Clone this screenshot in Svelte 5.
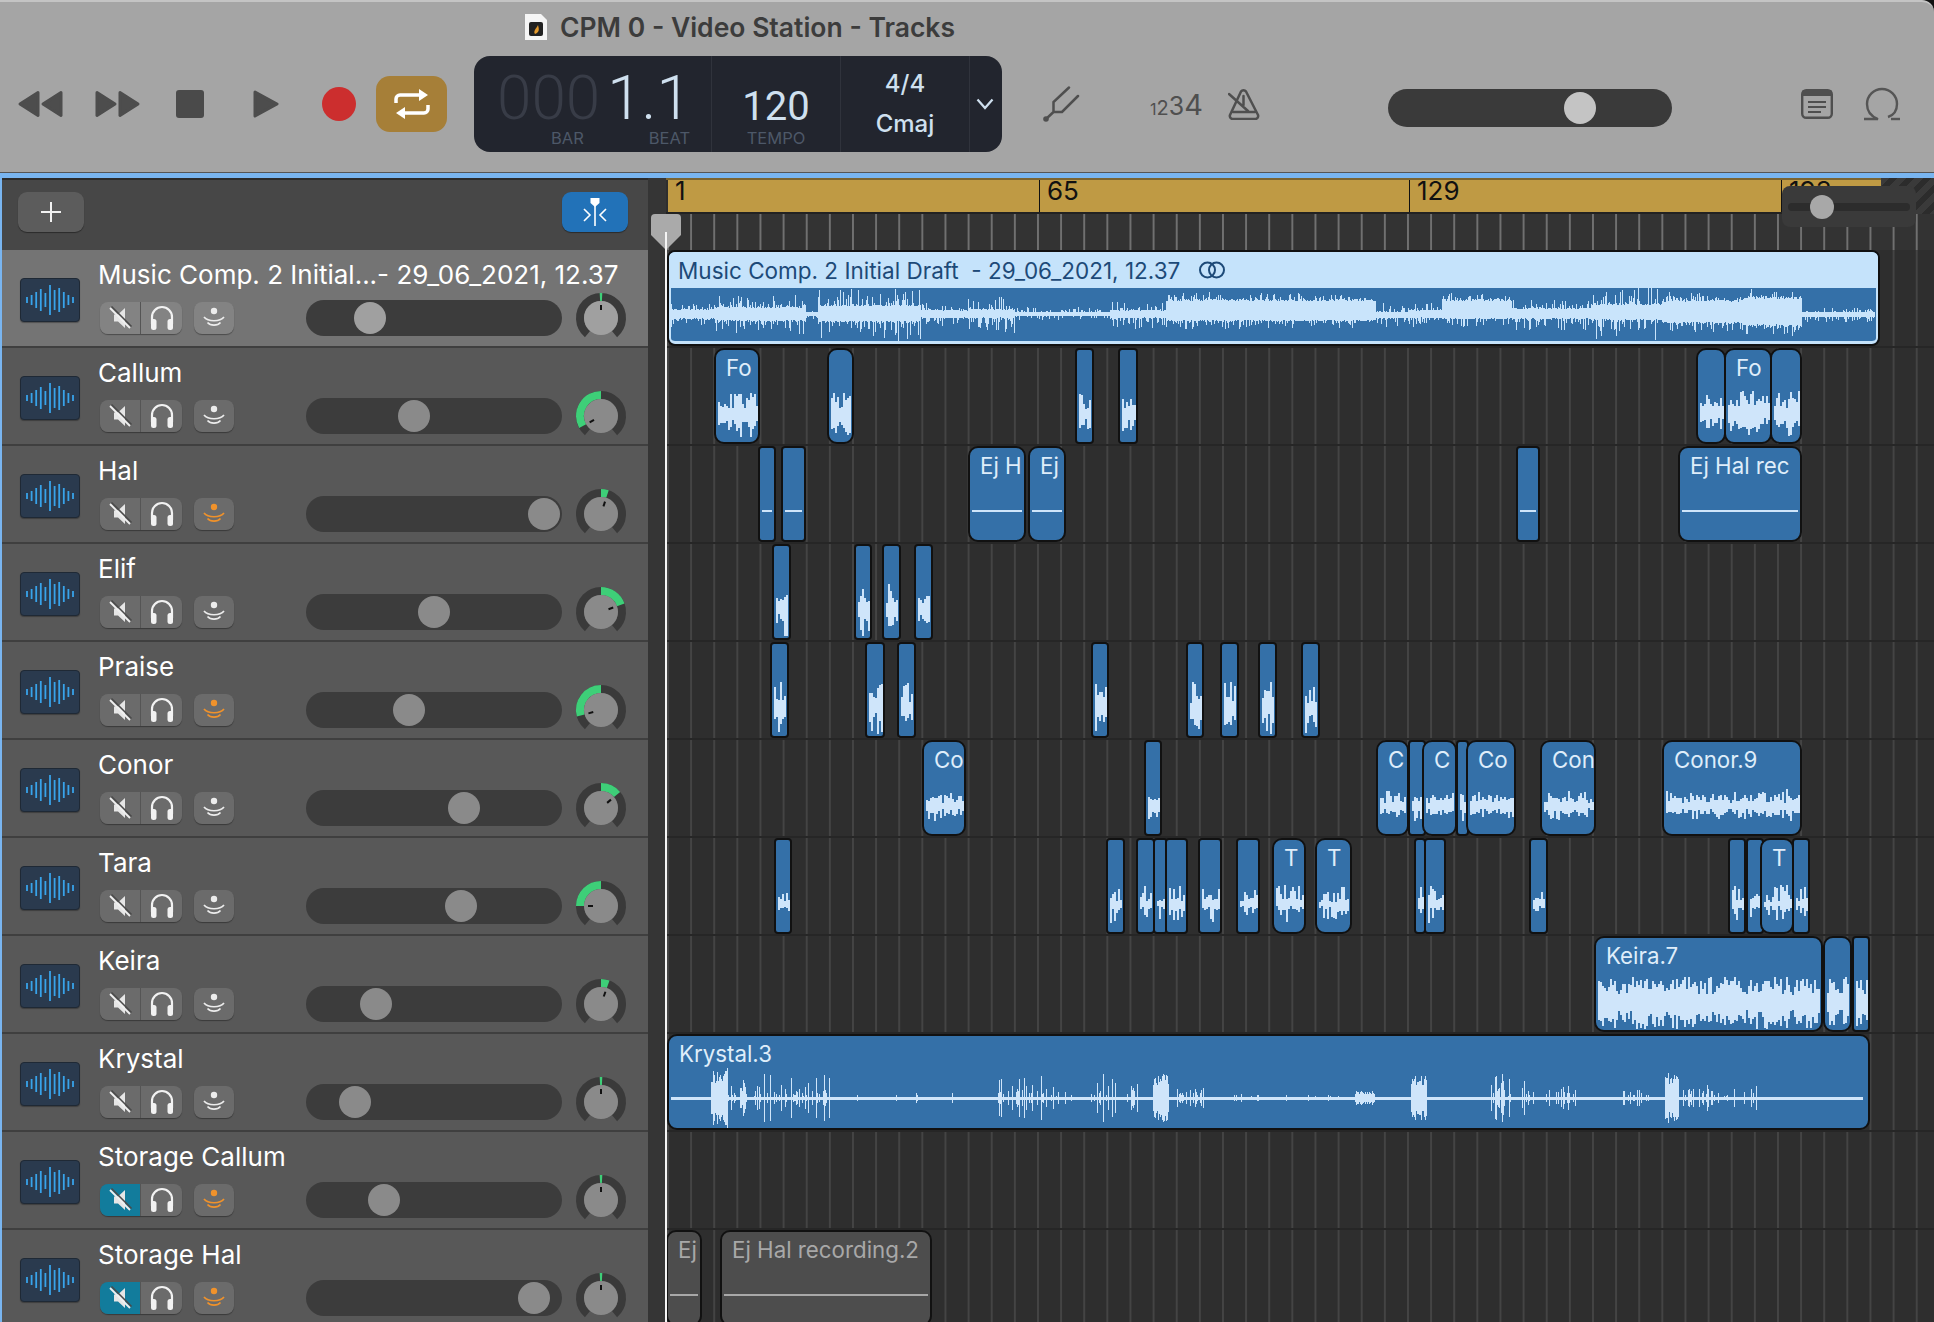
<script>
  // pan is the knob angle in degrees, 0 = centre
  const tracks = [
    { name: "Music Comp. 2 Initial...- 29_06_2021, 12.37", vol: 370, pan: 0, selected: true },
    { name: "Callum", vol: 414, pan: -119 },
    { name: "Hal", vol: 544, pan: 18, mon: true },
    { name: "Elif", vol: 434, pan: 70 },
    { name: "Praise", vol: 409, pan: -105, mon: true },
    { name: "Conor", vol: 464, pan: 50 },
    { name: "Tara", vol: 461, pan: -90 },
    { name: "Keira", vol: 376, pan: 20 },
    { name: "Krystal", vol: 355, pan: 0 },
    { name: "Storage Callum", vol: 384, pan: 0, mon: true, muted: true },
    { name: "Storage Hal", vol: 534, pan: 0, mon: true, muted: true }
  ];

  const ORIGIN = 666;

  const narrow = (pairs, core, spike, max) => pairs.map(([l, r, label]) => ({ l, r, label, core, spike, max }));

  const lanes = [
    [],
    narrow([[715, 759, "Fo"], [828, 853], [1076, 1093], [1119, 1137], [1697, 1725], [1725, 1771, "Fo"], [1771, 1801]], 16, 12, 23),
    narrow([[759, 775], [782, 805], [969, 1025, "Ej H"], [1029, 1065, "Ej"], [1517, 1539], [1679, 1801, "Ej Hal rec"]], 1, 0),
    narrow([[773, 790], [855, 871], [883, 900], [915, 932]], 15, 18, 26),
    narrow([[771, 788], [866, 884], [898, 915], [1092, 1108], [1187, 1203], [1221, 1238], [1259, 1276], [1302, 1319]], 15, 18, 26),
    narrow([[923, 965, "Co"], [1145, 1161], [1377, 1408, "C"], [1409, 1425], [1423, 1456, "C"], [1457, 1468], [1467, 1515, "Co"], [1541, 1595, "Con"], [1663, 1801, "Conor.9"]], 9, 9, 17),
    narrow([[775, 791], [1107, 1124], [1137, 1154], [1154, 1167], [1166, 1187], [1199, 1221], [1237, 1259], [1273, 1305, "T"], [1316, 1351, "T"], [1415, 1425], [1425, 1445], [1530, 1547], [1729, 1745], [1747, 1763], [1761, 1793, "T"], [1793, 1809]], 6, 15, 20),
    narrow([[1595, 1822, "Keira.7"], [1824, 1851], [1853, 1869]], 24, 10, 26),
    [{ l: 668, r: 1869, label: "Krystal.3", kind: "sparse" }],
    [],
    [
      { l: 667, r: 701, label: "Ej", core: 1, spike: 0, off: true },
      { l: 721, r: 931, label: "Ej Hal recording.2", core: 1, spike: 0, off: true }
    ]
  ];

  // x in px from the left of the clip, [from, up, down, spike]
  const draftEnv = [
    [0, 5, 5, 3], [46, 7, 7, 5], [137, 2, 2, 1], [149, 9, 8, 7], [252, 4, 4, 3], [299, 5, 4, 6],
    [346, 2, 1, 2], [441, 4, 4, 4], [497, 15, 7, 3], [707, 2, 4, 5], [739, 4, 4, 3], [773, 15, 5, 3],
    [843, 6, 5, 4], [922, 10, 6, 7], [993, 14, 9, 4], [1074, 17, 12, 4], [1133, 2, 3, 2]
  ];

  const bursts = [
    [42, 59, 30, 1], [59, 162, 24, 0], [187, 191, 16, 0], [226, 250, 6, 0], [273, 289, 6, 0], [329, 385, 22, 0],
    [385, 405, 6, 0], [421, 469, 25, 0], [484, 500, 25, 1], [508, 535, 12, 0], [559, 591, 4, 0], [606, 670, 3, 0],
    [686, 706, 7, 1], [742, 758, 25, 1], [822, 842, 25, 0], [850, 866, 20, 0], [874, 914, 12, 0], [950, 982, 8, 0],
    [996, 1010, 26, 1], [1014, 1090, 13, 0], [1124, 1132, 2, 0], [1188, 1192, 6, 0]
  ];

  function rng(seed) {
    let s = seed * 9301 + 49297;
    return () => {
      s = (s * 1664525 + 1013904223) % 4294967296;
      return s / 4294967296;
    };
  }

  function wave(w, seed, core, spike, max, c) {
    const r = rng(seed);
    let d = "";
    for (let x = 3; x < w - 2; x += 2) {
      const base = core * (0.3 + 0.7 * r());
      const up = Math.min(max, base + Math.pow(r(), 3) * spike);
      const dn = Math.min(max, base * 0.9 + Math.pow(r(), 3) * spike);
      d += `M${x} ${(c - up).toFixed(0)}V${(c + dn).toFixed(0)}`;
    }
    return d;
  }

  function draftWave() {
    const r = rng(7);
    let d = "";
    for (let x = 0; x < 1206; x++) {
      const e = draftEnv.filter((v) => v[0] <= x).pop();
      const up = e[1] * (0.85 + 0.15 * r()) + Math.pow(r(), 5) * e[3] * 2.5;
      const dn = e[2] * (0.85 + 0.15 * r()) + Math.pow(r(), 5) * e[3] * 3;
      d += `M${x + 0.5} ${(62 - up).toFixed(0)}V${(62 + dn).toFixed(0)}`;
    }
    return d;
  }

  function sparseWave() {
    const r = rng(21);
    let d = "";
    for (const [a, b, amp, dense] of bursts) {
      for (let x = a; x < b; x++) {
        const k = dense ? 0.5 + 0.5 * r() : Math.pow(r(), 4);
        if (k * amp < 2) continue;
        d += `M${x + 0.5} ${(62 - k * amp).toFixed(0)}V${(62 + k * amp).toFixed(0)}`;
      }
    }
    return d;
  }

  function clipPath(c) {
    if (c.kind === "sparse") return sparseWave();
    if (c.core === 1 && c.spike === 0) return `M2 63H${c.r - c.l - 4}`;
    return wave(c.r - c.l, c.l, c.core, c.spike, c.max, c.core > 20 ? 65 : 64);
  }

  function polar(deg, rad) {
    const a = ((deg - 90) * Math.PI) / 180;
    return `${(30 + rad * Math.cos(a)).toFixed(2)} ${(30 + rad * Math.sin(a)).toFixed(2)}`;
  }

  function arc(from, to, rad) {
    const large = Math.abs(to - from) > 180 ? 1 : 0;
    return `M${polar(from, rad)}A${rad} ${rad} 0 ${large} 1 ${polar(to, rad)}`;
  }

  function panArc(pan) {
    if (pan === 0) return arc(-3, 3, 21);
    return pan < 0 ? arc(pan, 0, 21) : arc(0, pan, 21);
  }

  const trackBars = [6, 10, 16, 22, 14, 30, 20, 24, 16, 10, 6];
</script>

<div class="app">
  <header class="toolbar">
    <div class="title-row">
      <svg class="doc" width="24" height="28" viewBox="0 0 24 28">
        <path d="M1 1H17L23 7V27H1Z" fill="#f5f5f5" />
        <rect x="5" y="9" width="14" height="14" rx="2" fill="#222" />
        <path d="M11 21c-2-3 1-5 3-9 1 4 2 7-3 9Z" fill="#e49a2c" />
      </svg>
      <span class="title">CPM 0 - Video Station - Tracks</span>
    </div>
    <div class="controls">
      <svg class="rewind" width="46" height="28" viewBox="0 0 46 28"><path d="M21 2.500 3 14l18 11.500ZM44 2.500 26 14l18 11.500Z" fill="#4d4d4d" stroke="#4d4d4d" stroke-width="3" stroke-linejoin="round" /></svg>
      <svg class="forward" width="46" height="28" viewBox="0 0 46 28"><path d="M2 2.500 20 14 2 25.500ZM25 2.500 43 14 25 25.500Z" fill="#4d4d4d" stroke="#4d4d4d" stroke-width="3" stroke-linejoin="round" /></svg>
      <div class="stop"></div>
      <svg class="play" width="26" height="28" viewBox="0 0 26 28"><path d="M2 2 24 14 2 26Z" fill="#4d4d4d" stroke="#4d4d4d" stroke-width="3" stroke-linejoin="round" /></svg>
      <div class="record"></div>
      <button class="cycle" aria-label="Cycle">
        <svg width="36" height="32" viewBox="0 0 36 32" fill="none" stroke="#fff" stroke-width="3.500">
          <path d="M2 15v-4a4 4 0 0 1 4-4h21" />
          <path d="M34 17v4a4 4 0 0 1-4 4H9" />
          <path d="M25 1l9 6-9 6ZM11 19l-9 6 9 6Z" fill="#fff" stroke="none" />
        </svg>
      </button>
      <div class="lcd">
        <div class="lcd-pos">
          <div class="digits"><span class="dim">000</span><span class="lit">1.1</span></div>
          <div class="lcd-labels"><span class="bar">BAR</span><span class="beat">BEAT</span></div>
        </div>
        <div class="lcd-tempo">
          <div class="tempo">120</div>
          <span class="tempo-label">TEMPO</span>
        </div>
        <div class="lcd-sig">
          <span>4/4</span>
          <span>Cmaj</span>
        </div>
        <svg class="chevron" width="18" height="12" viewBox="0 0 18 12" fill="none" stroke="#cfe0ef" stroke-width="2.200"><path d="M1.500 1.500 9 10 16.500 1.500" /></svg>
      </div>
      <svg class="fork" width="37" height="36" viewBox="0 0 37 36" fill="none" stroke="#4f4f4f" stroke-width="2.500" stroke-linecap="round">
        <path d="M3 33 10.500 26M10.500 26V16L26 1.500M10.500 26H19L35 10" />
        <circle cx="3" cy="33" r="2.800" fill="#4f4f4f" stroke="none" />
      </svg>
      <div class="count"><span class="c1">1</span><span class="c2">2</span><span class="c3">3</span><span class="c4">4</span></div>
      <svg class="metro" width="32" height="32" viewBox="0 0 32 32" fill="none" stroke="#4f4f4f" stroke-width="2.500" stroke-linecap="round" stroke-linejoin="round">
        <path d="M13 3.500a3 3 0 0 1 5 0L30 27a3 3 0 0 1-2.500 4H4.500A3 3 0 0 1 2 27Z" />
        <path d="M5 24H27M1 6 20 23M15.500 8V17" />
      </svg>
      <div class="master"><div class="master-knob"></div></div>
      <svg class="note" width="32" height="30" viewBox="0 0 32 30">
        <rect x="1.200" y="1.200" width="29.600" height="27.600" rx="4" fill="none" stroke="#4f4f4f" stroke-width="2.400" />
        <path d="M3 1H29a2 2 0 0 1 2 2V7H1V3a2 2 0 0 1 2-2Z" fill="#4f4f4f" />
        <path d="M7 13H25M7 18H25M7 23H20" stroke="#4f4f4f" stroke-width="2" />
      </svg>
      <svg class="loop" width="38" height="34" viewBox="0 0 38 34" fill="none" stroke="#555" stroke-width="2.400">
        <path d="M1 32H15C7 29 4 23 4 17a15 15 0 0 1 30 0c0 6-3 11-9 13" />
        <path d="M28 32H37" />
      </svg>
    </div>
  </header>
  <div class="accent"></div>

  <main class="workspace">
    <aside class="headers">
      <div class="headers-bar">
        <button class="add" aria-label="Add track">
          <svg width="22" height="22" viewBox="0 0 22 22" stroke="#f2f2f2" stroke-width="2"><path d="M11 1V21M1 11H21" /></svg>
        </button>
        <button class="smart" aria-label="Catch">
          <svg width="26" height="28" viewBox="0 0 26 28" fill="none" stroke="#fff" stroke-width="1.600">
            <path d="M8.500 0H17.500V5L13 9 8.500 5Z" fill="#fff" stroke="none" />
            <path d="M13 8V28M2 11 8 17 2 23M24 11 18 17 24 23" />
          </svg>
        </button>
      </div>
      {#each tracks as t}
        <div class="track" class:selected={t.selected}>
          <div class="track-icon">
            <svg width="48" height="32" viewBox="0 0 48 32" stroke="#38a3ea" stroke-width="1.800">
              {#each trackBars as h, i}
                <line x1={1 + i * 4.6} x2={1 + i * 4.6} y1={16 - h / 2} y2={16 + h / 2} />
              {/each}
            </svg>
          </div>
          <div class="track-body">
            <div class="track-name">{t.name}</div>
            <div class="track-controls">
              <div class="ms">
                <button class="mute" class:on={t.muted} aria-label="Mute">
                  <svg width="26" height="26" viewBox="0 0 26 26">
                    <path d="M7 9.500H11L18 3V23L11 16.500H7Z" fill="#e6e6e6" />
                    <path d="M3 3 23 23" stroke="#4a4a4a" stroke-width="1.600" transform="translate(1.500 -1.500)" />
                    <path d="M3 3 23 23" stroke="#f0f0f0" stroke-width="1.800" />
                  </svg>
                </button>
                <button class="solo" aria-label="Solo">
                  <svg width="26" height="28" viewBox="0 0 26 28" fill="none" stroke="#f2f2f2" stroke-width="2.200">
                    <path d="M3 20V13a10 10 0 0 1 20 0V20" />
                    <rect x="2" y="15" width="5.500" height="11" rx="2.500" fill="#f2f2f2" stroke="none" />
                    <rect x="18.500" y="15" width="5.500" height="11" rx="2.500" fill="#f2f2f2" stroke="none" />
                  </svg>
                </button>
              </div>
              <button class="monitor" aria-label="Input monitoring">
                <svg width="26" height="24" viewBox="0 0 26 24" fill="none" stroke={t.mon ? "#f0922b" : "#ececec"} stroke-width="1.700">
                  <circle cx="13" cy="5" r="3.200" fill={t.mon ? "#f0922b" : "#ececec"} stroke="none" />
                  <path d="M3 11c4 5 16 5 20 0M6.500 16.500c3 3.500 10 3.500 13 0" />
                </svg>
              </button>
              <div class="volume">
                <div class="volume-knob" style="margin-left: {t.vol - 322}px"></div>
              </div>
              <svg class="pan" width="60" height="60" viewBox="0 0 60 60" fill="none">
                <path d={arc(-140, 140, 21)} stroke="#3a3a3a" stroke-width="8" />
                <path d={panArc(t.pan)} stroke="#3ecf78" stroke-width="8" />
                <circle cx="30" cy="30" r="17" fill={t.selected ? "#a0a0a0" : "#8a8a8a"} />
                <path d={`M${polar(t.pan, 8)}L${polar(t.pan, 13)}`} stroke="#111" stroke-width="2" />
              </svg>
            </div>
          </div>
        </div>
      {/each}
    </aside>
    <div class="gutter"></div>

    <section class="timeline">
      <div class="ruler">
        <div class="ruler-cell first"><span>1</span></div>
        <div class="ruler-cell second"><span>65</span></div>
        <div class="ruler-cell third"><span>129</span></div>
        <div class="ruler-cell last"><span>193</span></div>
        <div class="ruler-end"></div>
      </div>
      <div class="ticks"></div>
      <div class="lanes">
        {#each lanes as lane, i}
          <div class="lane">
            {#if i === 0}
              <div class="clip draft" style="left: {667 - ORIGIN}px; width: 1213px">
                <div class="draft-head">
                  Music Comp. 2 Initial Draft&nbsp; - 29_06_2021, 12.37
                  <svg width="28" height="18" viewBox="0 0 28 18" fill="none" stroke="#1d4a78" stroke-width="2"><circle cx="9.500" cy="9" r="7.500" /><circle cx="18.500" cy="9" r="7.500" /></svg>
                </div>
                <svg class="wave" width="1209" height="92" viewBox="0 0 1209 92"><path d="M2 62.500H1206" stroke="#c9e4fb" stroke-width="3" /><path d={draftWave()} stroke="#c9e4fb" stroke-width="1" /></svg>
              </div>
            {/if}
            {#each lane as c}
              <div class="clip" class:off={c.off} class:thin={c.r - c.l < 24} style="left: {c.l - ORIGIN - 1}px; width: {c.r - c.l + 2}px">
                {#if c.label}<span class="clip-label">{c.label}</span>{/if}
                <svg class="wave" width={c.r - c.l} height="92" viewBox="0 0 {c.r - c.l} 92">
                  {#if c.kind === "sparse"}<path d="M2 62.500H1194" stroke="#cfe5fa" stroke-width="3" />{/if}
                  <path d={clipPath(c)} stroke={c.off ? "#a8a8a8" : "#cfe5fa"} stroke-width={c.kind === "sparse" ? 1 : 2} />
                </svg>
              </div>
            {/each}
          </div>
        {/each}
      </div>
      <div class="zoom">
        <div class="zoom-track"><div class="zoom-knob"></div></div>
      </div>
    </section>

    <div class="playhead">
      <svg width="30" height="36" viewBox="0 0 30 36"><path d="M0 4a4 4 0 0 1 4-4H26a4 4 0 0 1 4 4V21L15 36 0 21Z" fill="#aaa" /></svg>
      <div class="playhead-line"></div>
    </div>
  </main>
</div>

<style>
  :global(body) {
    margin: 0;
    background: #111;
  }

  button {
    border: 0;
    padding: 0;
    display: flex;
    align-items: center;
    justify-content: center;
  }

  .app {
    width: 1934px;
    height: 1322px;
    overflow: hidden;
    display: flex;
    flex-direction: column;
    font-family: Inter, "Liberation Sans", sans-serif;
  }

  .toolbar {
    height: 172px;
    box-sizing: border-box;
    flex: none;
    background: #a5a5a5;
    border-top: 2px solid #c4c4c4;
    border-top-right-radius: 12px;
  }

  .title-row {
    height: 50px;
    margin-bottom: 4px;
    display: flex;
    align-items: center;
    padding-left: 524px;
    gap: 12px;
  }

  .title {
    font-size: 26.500px;
    font-weight: 600;
    color: #3c3c3c;
  }

  .controls {
    height: 96px;
    display: flex;
    align-items: center;
    padding-left: 17px;
  }

  .forward { margin-left: 32px; }
  .stop {
    margin-left: 35px;
    width: 28px;
    height: 28px;
    border-radius: 3px;
    background: #4a4a4a;
  }
  .play { margin-left: 49px; }
  .record {
    margin-left: 43px;
    width: 34px;
    height: 34px;
    border-radius: 50%;
    background: #cc2e2e;
  }
  .cycle {
    margin-left: 20px;
    width: 71px;
    height: 56px;
    border-radius: 14px;
    background: #a67f38;
  }

  .lcd {
    margin-left: 27px;
    width: 528px;
    height: 96px;
    border-radius: 16px;
    background: #22252e;
    display: grid;
    grid-template-columns: 238px 129px 129px 32px;
    align-items: stretch;
    color: #cfe0ef;
  }
  .lcd-pos, .lcd-tempo, .lcd-sig {
    border-right: 1px solid #30333c;
  }
  .lcd-pos { padding: 10px 0 0 23px; }
  .digits {
    font-family: Roboto, sans-serif;
    font-weight: 300;
    font-size: 62px;
    line-height: 64px;
    height: 64px;
  }
  .dim { color: #383c47; }
  .lit { margin-left: 7px; }
  .lcd-labels, .tempo-label {
    font-size: 16.500px;
    line-height: 16px;
    color: #4d5868;
  }
  .lcd-labels { display: flex; }
  .bar { margin-left: 54px; }
  .beat { margin-left: 65px; }
  .lcd-tempo {
    display: flex;
    flex-direction: column;
    align-items: center;
    padding-top: 29px;
    box-sizing: border-box;
  }
  .tempo {
    font-family: Roboto, sans-serif;
    font-size: 40px;
    line-height: 44px;
    height: 45px;
  }
  .lcd-sig {
    display: flex;
    flex-direction: column;
    align-items: center;
    justify-content: center;
    gap: 11px;
    padding-bottom: 2px;
    box-sizing: border-box;
    font-size: 24px;
    font-weight: 500;
    line-height: 29px;
  }
  .chevron { align-self: center; margin-left: 6px; }

  .fork { margin-left: 41px; }
  .count {
    margin-left: 70px;
    width: 53px;
    color: #4f4f4f;
    display: flex;
    align-items: baseline;
  }
  .c1 { font-size: 16px; }
  .c2 { font-size: 20px; }
  .c3 { font-size: 25px; }
  .c4 { font-size: 29px; }
  .metro { margin-left: 25px; }
  .master {
    margin: 7px 0 0 128px;
    width: 284px;
    height: 38px;
    border-radius: 19px;
    background: #3a3a3a;
    display: flex;
    align-items: center;
  }
  .master-knob {
    margin-left: 176px;
    width: 32px;
    height: 32px;
    border-radius: 50%;
    background: #c4c4c4;
  }
  .note { margin-left: 129px; }
  .loop { margin-left: 30px; }

  .accent {
    height: 6px;
    flex: none;
    background: #79b5f0;
    border-top: 1px solid #555;
    box-sizing: border-box;
  }

  .workspace {
    flex: 1;
    display: flex;
    position: relative;
    min-height: 0;
    background: #2e2e2e;
  }

  .headers {
    width: 648px;
    flex: none;
    box-sizing: border-box;
    border-left: 2px solid #79b5f0;
  }
  .headers-bar {
    height: 72px;
    box-sizing: border-box;
    background: #474747;
    border-top: 2px solid #2b2b2b;
    display: flex;
    justify-content: space-between;
    padding: 12px 20px 0 16px;
  }
  .add, .smart {
    width: 66px;
    height: 40px;
    border-radius: 9px;
    box-shadow: 0 1px 1px rgba(0, 0, 0, 0.4);
  }
  .add { background: #5c5c5c; }
  .smart { background: #2272b8; }

  .track {
    height: 98px;
    box-sizing: border-box;
    background: #585858;
    border-bottom: 2px solid #3f3f3f;
    display: flex;
    padding: 11px 0 0 18px;
    gap: 18px;
  }
  .track.selected { background: #747474; }
  .track-icon {
    flex: none;
    width: 60px;
    height: 44px;
    margin-top: 17px;
    box-sizing: border-box;
    border: 1px solid #1f2935;
    border-radius: 4px;
    background: #2a3a4e;
    display: flex;
    align-items: center;
    justify-content: center;
    box-shadow: 0 1px 1px rgba(0, 0, 0, 0.3);
  }
  .track-body { flex: 1; }
  .track-name {
    height: 27px;
    font-size: 26px;
    line-height: 27px;
    color: #fff;
    white-space: nowrap;
  }
  .track-controls {
    height: 60px;
    display: flex;
    align-items: center;
    padding-left: 2px;
  }
  .ms {
    display: flex;
    height: 32px;
    border-radius: 8px;
    overflow: hidden;
    box-shadow: 0 1px 1px rgba(0, 0, 0, 0.35);
  }
  .mute, .solo {
    width: 41px;
    height: 32px;
    background: #6b6b6b;
  }
  .mute { border-right: 1px solid #555; }
  .mute.on { background: #127c9c; }
  .monitor {
    margin-left: 12px;
    width: 40px;
    height: 32px;
    border-radius: 8px;
    background: #6b6b6b;
    box-shadow: 0 1px 1px rgba(0, 0, 0, 0.35);
  }
  .selected .mute, .selected .solo, .selected .monitor { background: #838383; }
  .volume {
    margin-left: 72px;
    width: 256px;
    height: 36px;
    border-radius: 18px;
    background: #3c3c3c;
    display: flex;
    align-items: center;
  }
  .volume-knob {
    width: 32px;
    height: 32px;
    border-radius: 50%;
    background: #8a8a8a;
  }
  .selected .volume-knob { background: #a0a0a0; }
  .pan { margin-left: 9px; flex: none; }

  .gutter {
    width: 18px;
    flex: none;
    background: #353535;
  }

  .timeline {
    flex: 1;
    position: relative;
    min-width: 0;
  }
  .ruler {
    height: 36px;
    box-sizing: border-box;
    display: flex;
    padding-left: 2px;
    border-top: 2px solid #7a6432;
    border-bottom: 2px solid #222;
    background: linear-gradient(90deg, #2e2e2e 2px, #bf9a44 2px);
    color: #111;
    font-size: 26px;
    line-height: 30px;
  }
  .ruler-cell {
    box-sizing: border-box;
    padding-left: 7px;
    border-left: 1px solid #111;
  }
  .ruler-cell span {
    display: block;
    margin-top: -4px;
  }
  .first { width: 371px; border-left: 0; }
  .second { width: 370px; }
  .third { width: 372px; }
  .last { width: 100px; }
  .ruler-end {
    flex: 1;
    margin-top: -2px;
    margin-bottom: -2px;
    background: repeating-linear-gradient(135deg, #3a3a3a 0 6px, #2c2c2c 6px 12px);
  }
  .ticks {
    height: 36px;
    background-color: #333;
    background-image: linear-gradient(90deg, #707070 1.500px, transparent 1.500px);
    background-size: 23.125px 100%;
    background-position: 1px 0;
  }
  .lane {
    height: 98px;
    box-sizing: border-box;
    position: relative;
    border-bottom: 2px solid #262626;
    background-color: #2e2e2e;
    background-image: linear-gradient(90deg, #444 1.500px, transparent 1.500px);
    background-size: 23.125px 100%;
    background-position: 1px 0;
  }
  .clip {
    position: absolute;
    top: 0;
    height: 96px;
    box-sizing: border-box;
    border: 2px solid #111;
    border-radius: 10px;
    background: #3470a8;
    overflow: hidden;
  }
  .clip.thin { border-radius: 4px; }
  .clip.off {
    background: #4d4d4d;
  }
  .clip-label {
    display: block;
    padding: 4px 0 0 10px;
    font-size: 22.300px;
    line-height: 28px;
    color: #dfedfa;
    white-space: nowrap;
  }
  .off .clip-label { color: #a8a8a8; }
  .wave {
    position: absolute;
    left: 0;
    top: 0;
  }
  .draft {
    border-radius: 8px;
    box-shadow: inset 0 -3px 0 #c5e3fb, inset 2px 0 0 #c5e3fb, inset -2px 0 0 #c5e3fb;
  }
  .draft-head {
    height: 36px;
    box-sizing: border-box;
    padding-left: 9px;
    display: flex;
    align-items: center;
    gap: 11px;
    background: #c5e3fb;
    color: #1d4a78;
    font-size: 22.500px;
    white-space: pre;
  }

  .zoom {
    position: absolute;
    left: 1116px;
    top: 8px;
    width: 134px;
    height: 41px;
    border-radius: 8px;
    background: #3a3a3a;
    display: flex;
    align-items: center;
    padding: 0 6px;
    box-sizing: border-box;
  }
  .zoom-track {
    flex: 1;
    height: 8px;
    border-radius: 4px;
    background: #2c2c2c;
    display: flex;
    align-items: center;
  }
  .zoom-knob {
    margin-left: 22px;
    width: 24px;
    height: 24px;
    border-radius: 50%;
    background: #a8a8a8;
  }

  .playhead {
    position: absolute;
    left: 651px;
    top: 36px;
    bottom: 0;
    display: flex;
    flex-direction: column;
    align-items: center;
    width: 30px;
  }
  .playhead-line {
    position: absolute;
    top: 18px;
    bottom: 0;
    width: 2px;
    background: #f4f4f4;
  }
</style>
